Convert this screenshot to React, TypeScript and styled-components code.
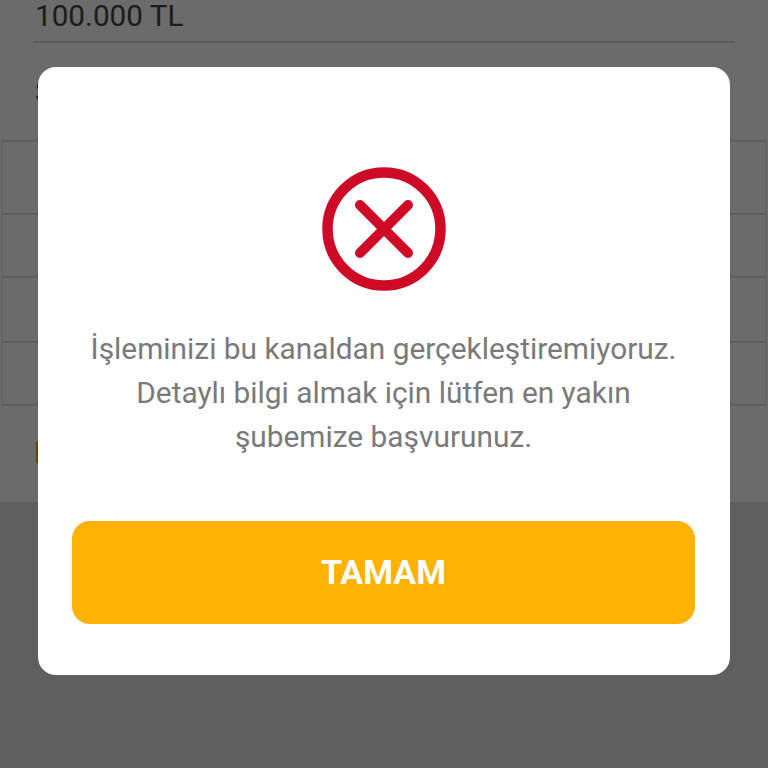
import styled, { createGlobalStyle } from 'styled-components';

const rows = [73, 63, 65, 63];

const GlobalStyle = createGlobalStyle`
  html, body {
    margin: 0;
    padding: 0;
    background: #e2e2e2;
  }
`;

export default function App() {
  return (
    <>
      <GlobalStyle />
      <Page>
        <Form>
          <AmountValue>100.000 TL</AmountValue>
          <SectionLabel>Seçenekler</SectionLabel>
          <OptionTable>
            {rows.map((height, index) => (
              <OptionRow key={index} style={{ height }} />
            ))}
          </OptionTable>
          <WarningText>Lütfen</WarningText>
        </Form>
        <Overlay>
          <Dialog>
            <ErrorIcon viewBox="0 0 124 124" aria-hidden="true">
              <circle cx="62" cy="62" r="56.5" fill="none" stroke="#cf0a26" strokeWidth="10.5" />
              <path
                d="M38 38 L86 86 M86 38 L38 86"
                fill="none"
                stroke="#cf0a26"
                strokeWidth="10"
                strokeLinecap="round"
              />
            </ErrorIcon>
            <Message>
              İşleminizi bu kanaldan gerçekleştiremiyoruz.
              <br />
              Detaylı bilgi almak için lütfen en yakın
              <br />
              şubemize başvurunuz.
            </Message>
            <ConfirmButton type="button">TAMAM</ConfirmButton>
          </Dialog>
        </Overlay>
      </Page>
    </>
  );
}

const Page = styled.div`
  position: relative;
  width: 768px;
  height: 768px;
  overflow: hidden;
  background: #e2e2e2;
  font-family: Roboto, 'Liberation Sans', sans-serif;
`;

const Form = styled.div`
  height: 502px;
  box-sizing: border-box;
  background: #ffffff;
  display: flex;
  flex-direction: column;
`;

const AmountValue = styled.div`
  height: 43px;
  margin: 0 33px;
  padding-left: 2px;
  box-sizing: border-box;
  border-bottom: 2px solid #dbdbdb;
  font-size: 29.7px;
  line-height: 31px;
  color: #464646;
`;

const SectionLabel = styled.div`
  margin: 33px 0 0 35px;
  height: 64px;
  font-size: 29.7px;
  line-height: 32px;
  color: #464646;
`;

const OptionTable = styled.div`
  margin: 0 1px;
  border-top: 2px solid #dfdfdf;
  border-left: 2px solid #f0f0f0;
  border-right: 2px solid #f0f0f0;
`;

const OptionRow = styled.div`
  box-sizing: border-box;
  border-bottom: 2px solid #dfdfdf;
`;

const WarningText = styled.div`
  margin: 32px 0 0 34px;
  font-size: 29px;
  font-weight: 500;
  line-height: 30px;
  color: #ffa000;
`;

const Overlay = styled.div`
  position: absolute;
  inset: 0;
  padding: 67px 0 0 38px;
  box-sizing: border-box;
  background: rgba(0, 0, 0, 0.58);
`;

const Dialog = styled.div`
  width: 692px;
  height: 608px;
  box-sizing: border-box;
  padding: 100px 35px 0 34px;
  border-radius: 18px;
  background: #ffffff;
  display: flex;
  flex-direction: column;
  align-items: center;
`;

const ErrorIcon = styled.svg`
  width: 124px;
  height: 124px;
  flex: none;
`;

const Message = styled.p`
  margin: 36px 0 0;
  font-size: 29.85px;
  line-height: 44px;
  color: #7a7a7a;
  text-align: center;
  white-space: nowrap;
`;

const ConfirmButton = styled.button`
  width: 623px;
  height: 103px;
  margin-top: 62px;
  flex: none;
  border: none;
  border-radius: 18px;
  background: #fdb100;
  color: #ffffff;
  font-family: Roboto, 'Liberation Sans', sans-serif;
  font-size: 34px;
  font-weight: 700;
  line-height: 100px;
  padding: 0 0 2px;
`;
